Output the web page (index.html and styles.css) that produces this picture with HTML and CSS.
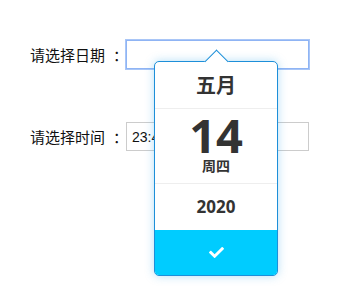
FILE: index.html
```html
<!DOCTYPE html>
<html lang="zh-CN">
  <head>
    <meta charset="UTF-8" />
    <meta name="viewport" content="width=device-width, initial-scale=1.0" />
    <title>日期选择</title>
    <link rel="stylesheet" href="styles.css">
  </head>

  <body>
    <form class="form">
      <div class="row">
        <label class="label" for="date">请选择日期<span class="colon">：</span></label>
        <div class="field">
          <input class="input input-focus" id="date" type="text" value="" />
          <div class="picker">
            <span class="picker-arrow"></span>
            <div class="picker-month">五月</div>
            <div class="picker-day">
              <span class="picker-num">14</span>
              <span class="picker-week">周四</span>
            </div>
            <div class="picker-year">2020</div>
            <button class="picker-ok" type="button">
              <svg width="15" height="15" viewBox="0 0 512 512">
                <path d="M173.9 439.4l-166.4-166.4c-10-10-10-26.2 0-36.2l36.2-36.2c10-10 26.2-10 36.2 0L192 312.7 432.1 72.6c10-10 26.2-10 36.2 0l36.2 36.2c10 10 10 26.2 0 36.2l-294.4 294.4c-10 10-26.2 10-36.2 0z" fill="#fff" />
              </svg>
            </button>
          </div>
        </div>
      </div>
      <div class="row">
        <label class="label" for="time">请选择时间<span class="colon">：</span></label>
        <div class="field">
          <input class="input" id="time" type="text" value="23:45:12" />
        </div>
      </div>
    </form>
  </body>
</html>
```

FILE: styles.css
```css
html {
  box-sizing: border-box;
  font-family: "Noto Sans CJK SC", sans-serif;
  font-size: 15px;
  color: #000;
}

*,
*:before,
*:after {
  box-sizing: inherit;
}

body {
  margin: 0;
  min-height: 100vh;
  background: #fff;
}

.form {
  min-height: 100vh;
  padding: 40px 0 0 30px;
  display: flex;
  flex-direction: column;
  gap: 53px;
}

.row {
  display: flex;
  align-items: center;
  gap: 6px;
}

.label {
  flex-shrink: 0;
  white-space: nowrap;
  font-size: 15px;
  line-height: 29px;
  color: #111;
}

/* el colon de esta fuente queda pegado a la izquierda */
.colon {
  display: inline-block;
  padding-left: 8px;
  margin-right: -8px;
}

.field {
  position: relative;
  flex-shrink: 0;
}

.input {
  display: block;
  width: 183px;
  height: 29px;
  margin: 0;
  padding: 0 5px;
  border: 1px solid #ccc;
  font-family: "Liberation Sans", sans-serif;
  font-size: 14px;
  color: #111;
  outline: none;
}

.input-focus {
  border-color: #8fb4f4;
  box-shadow: 0 0 0 1px #a9c6f7;
}

.picker {
  position: absolute;
  z-index: 10;
  left: 28px;
  top: 21px;
  width: 124px;
  border: 1px solid #1d8fd9;
  border-radius: 5px;
  background: #fff;
  box-shadow: 0 0 10px rgba(40, 160, 230, 0.35);
  text-align: center;
  color: #333;
  font-weight: bold;
}

.picker-arrow {
  position: absolute;
  left: 50%;
  top: -9.5px;
  width: 17px;
  height: 17px;
  margin-left: -8.5px;
  background: #fff;
  border-top: 1px solid #1d8fd9;
  border-left: 1px solid #1d8fd9;
  transform: rotate(45deg);
}

.picker-month {
  position: relative;
  height: 47px;
  line-height: 46px;
  font-size: 20px;
  border-bottom: 1px solid #eee;
}

.picker-day {
  height: 75px;
  padding-top: 4px;
  display: flex;
  flex-direction: column;
  border-bottom: 1px solid #eee;
}

.picker-num {
  font-family: "Open Sans", sans-serif;
  font-size: 47px;
  line-height: 44px;
}

.picker-week {
  font-size: 14px;
  line-height: 16px;
}

.picker-year {
  height: 46px;
  line-height: 46px;
  font-family: "Open Sans", sans-serif;
  font-size: 17px;
}

.picker-ok {
  display: flex;
  align-items: center;
  justify-content: center;
  width: 100%;
  height: 45px;
  border: 0;
  border-radius: 0 0 4px 4px;
  background: #00ccff;
  cursor: pointer;
}
```
